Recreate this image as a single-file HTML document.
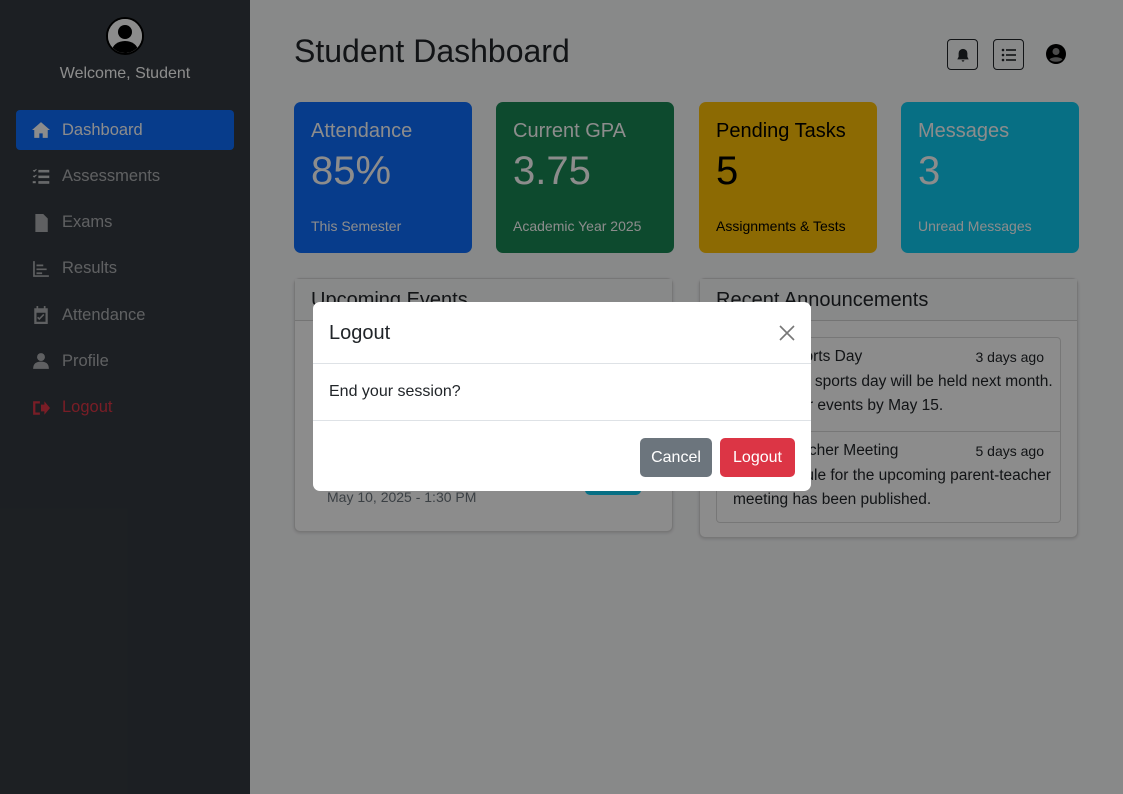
<!DOCTYPE html>
<html><head><meta charset="utf-8"><style>
*{box-sizing:border-box;margin:0;padding:0}
body{width:1123px;height:794px;overflow:hidden;font-family:"Liberation Sans",sans-serif;background:#f8f9fa;position:relative;color:#212529}
.sb{position:absolute;left:0;top:0;width:250px;height:794px;background:#343a40;color:#fff}
.av{position:absolute;left:106px;top:17px;width:38px;height:38px;border-radius:50%;background:#fff;overflow:hidden;border:2px solid #000}
.wel{position:absolute;top:65px;width:250px;text-align:center;font-size:16px;color:#fff}
.nav{position:absolute;left:16px;top:110px;width:218px}
.nav div{height:40px;margin-bottom:6.3px;border-radius:4px;display:flex;align-items:center;padding-left:16px;font-size:16.5px;color:rgba(255,255,255,.6)}
.nav div.a{background:#0d6efd;color:#fff}
.nav svg{width:18px;height:18px;margin-right:12px;fill:currentColor}
.nav div.lo{color:#dc3545}
h1{position:absolute;left:294px;top:33px;font-size:32px;font-weight:400}
.ib{position:absolute;top:39px;width:31px;height:31px;border:1px solid #212529;border-radius:4px;display:flex;align-items:center;justify-content:center}
.card{position:absolute;top:102px;width:178px;height:151px;border-radius:7px;color:#fff;padding:18px 17px}
.card .t{font-size:20px}.card .v{font-size:40px;margin-top:6px}.card .s{font-size:14px;position:absolute;top:116px}
.pn{position:absolute;top:278px;width:379px;background:#fff;border:1px solid rgba(0,0,0,.15);border-radius:6px;box-shadow:0 1px 3px rgba(0,0,0,.15)}
.pn .h{height:42px;border-bottom:1px solid rgba(0,0,0,.15);padding:10px 16px;font-size:20px;background:#f8f9fa}
.ov{position:absolute;inset:0;background:rgba(0,0,0,.45)}
.md{position:absolute;left:313px;top:302px;width:498px;height:189px;background:#fff;border-radius:7px}
.md .h{height:62px;border-bottom:1px solid #dee2e6;padding:20px 16px;font-size:20px}
.md .b{height:57px;border-bottom:1px solid #dee2e6;padding:19px 16px;font-size:16px}
.btn{position:absolute;top:136px;height:39px;border-radius:5px;color:#fff;font-size:16px;display:flex;align-items:center;justify-content:center}
.ann{margin:16px 16px 0;border:1px solid rgba(0,0,0,.15);border-radius:4px;font-size:15.5px}
.ann>div{padding:7px 16px;border-bottom:1px solid rgba(0,0,0,.15);line-height:24.5px;height:94px;white-space:nowrap}
.ann>div:last-child{border:0;height:90px}
</style></head><body>
<div class="sb">
<div class="av"><svg width="34" height="34" viewBox="0 0 34 34"><rect width="34" height="34" fill="#fff"/><circle cx="17" cy="13" r="7" fill="#000"/><ellipse cx="17" cy="32" rx="13" ry="10" fill="#000"/></svg></div>
<div class="wel">Welcome, Student</div>
<div class="nav">
<div class="a"><svg viewBox="0 0 16 16"><path d="M8 1L0 8h2v7h4.5v-4h3v4H14V8h2z"/></svg>Dashboard</div>
<div><svg viewBox="0 0 16 16"><path d="M1 3l1 1 2-2M1 8l1 1 2-2M1 13h2v1H1zM6 3h9v1.5H6zM6 8h9v1.5H6zM6 13h9v1.5H6z" stroke="currentColor" stroke-width=".8"/></svg>Assessments</div>
<div><svg viewBox="0 0 16 16"><path d="M3 0h7l4 4v12H3zM5 8h7v1H5zm0 2h7v1H5zm0 2h7v1H5z"/></svg>Exams</div>
<div><svg viewBox="0 0 16 16"><path d="M1 1h1.5v12.5H15V15H1zM4 4h6v1.5H4zm0 3.5h9V9H4zm0 3.5h5v1.5H4z"/></svg>Results</div>
<div><svg viewBox="0 0 16 16"><path d="M4 0h1.5v2h5V0H12v2h2v14H2V2h2zM4 6v8h8V6zm1.5 3.5l1 1L10 7l1 1-4.5 4.5-2-2z"/></svg>Attendance</div>
<div><svg viewBox="0 0 16 16"><circle cx="8" cy="4.5" r="3.5"/><path d="M1 15c0-5 3-6.5 7-6.5s7 1.5 7 6.5z"/></svg>Profile</div>
<div class="lo"><svg viewBox="0 0 16 16"><path d="M1 2h6v2H3v8h4v2H1zM8 5h3V2l5 6-5 6v-3H8z"/></svg>Logout</div>
</div></div>
<h1>Student Dashboard</h1>
<div class="ib" style="left:947px"><svg width="14" height="14" viewBox="0 0 16 16"><path d="M8 1a5 5 0 0 0-5 5v4l-1.5 3h13L13 10V6a5 5 0 0 0-5-5zM6.5 14a1.5 1.5 0 0 0 3 0z" fill="#212529"/></svg></div>
<div class="ib" style="left:993px"><svg width="16" height="14" viewBox="0 0 16 14" fill="#212529"><circle cx="2" cy="2" r="1.3"/><circle cx="2" cy="7" r="1.3"/><circle cx="2" cy="12" r="1.3"/><rect x="5" y="1.2" width="10" height="1.6"/><rect x="5" y="6.2" width="10" height="1.6"/><rect x="5" y="11.2" width="10" height="1.6"/></svg></div>
<svg style="position:absolute;left:1045px;top:43px" width="22" height="22" viewBox="0 0 22 22"><circle cx="11" cy="11" r="10" fill="#000"/><circle cx="11" cy="8.5" r="3.5" fill="#8a8a8a"/><path d="M4.5 16.5c2-3 11-3 13 0c-3 3-10 3-13 0z" fill="#8a8a8a"/></svg>
<div class="card" style="left:294px;background:#0d6efd"><div class="t">Attendance</div><div class="v">85%</div><div class="s">This Semester</div></div>
<div class="card" style="left:496px;background:#198754"><div class="t">Current GPA</div><div class="v">3.75</div><div class="s">Academic Year 2025</div></div>
<div class="card" style="left:699px;background:#ffc107;color:#000"><div class="t">Pending Tasks</div><div class="v">5</div><div class="s">Assignments &amp; Tests</div></div>
<div class="card" style="left:901px;background:#0dcaf0"><div class="t">Messages</div><div class="v">3</div><div class="s">Unread Messages</div></div>
<div class="pn" style="left:294px;height:254px"><div class="h">Upcoming Events</div>
<div style="position:absolute;left:290px;top:196px;width:56px;height:20px;background:#0dcaf0;border-radius:5px"></div>
<div style="position:absolute;left:32px;top:210px;font-size:14px;color:#6c757d">May 10, 2025 - 1:30 PM</div></div>
<div class="pn" style="left:699px;height:260px"><div class="h">Recent Announcements</div>
<div class="ann"><div><span style="float:right;font-size:14px">3 days ago</span>Annual Sports Day<br>The annual sports day will be held next month.<br>Register for events by May 15.</div>
<div><span style="float:right;font-size:14px">5 days ago</span>Parent-Teacher Meeting<br>The schedule for the upcoming parent-teacher<br>meeting has been published.</div></div></div>
<div class="ov"></div>
<div class="md"><div class="h">Logout<svg style="position:absolute;right:16px;top:23px" width="16" height="16" viewBox="0 0 16 16"><path d="M1 1L15 15M15 1L1 15" stroke="#777" stroke-width="1.6"/></svg></div>
<div class="b">End your session?</div>
<div class="btn" style="left:327px;width:72px;background:#6c757d">Cancel</div>
<div class="btn" style="left:407px;width:75px;background:#dc3545">Logout</div></div>
</body></html>
